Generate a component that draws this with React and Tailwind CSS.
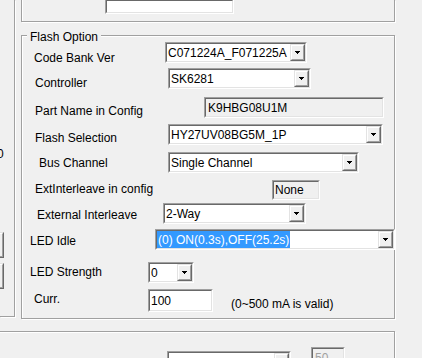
import React from 'react';

// Classic Win32 dialog: "Flash Option" group box with combos and edit boxes.

function Sunken({ className = '', bg = 'bg-white', children }) {
  return (
    <div className={`shrink-0 border border-t-[#a0a0a0] border-l-[#a0a0a0] border-r-white border-b-white ${className}`}>
      <div className={`h-full border border-t-[#696969] border-l-[#696969] border-r-[#e3e3e3] border-b-[#e3e3e3] ${bg}`}>
        {children}
      </div>
    </div>
  );
}

function Arrow() {
  return (
    <svg width="5" height="3" viewBox="0 0 5 3" shapeRendering="crispEdges">
      <rect x="0" y="0" width="5" height="1" fill="#000" />
      <rect x="1" y="1" width="3" height="1" fill="#000" />
      <rect x="2" y="2" width="1" height="1" fill="#000" />
    </svg>
  );
}

function DropBtn() {
  return (
    <div className="w-[15px] h-full shrink-0 border border-t-[#e3e3e3] border-l-[#e3e3e3] border-r-[#696969] border-b-[#696969]">
      <div className="h-full flex items-center justify-center border border-t-white border-l-white border-r-[#a0a0a0] border-b-[#a0a0a0] bg-[#f0f0f0]">
        <Arrow />
      </div>
    </div>
  );
}

function Combo({ className, text, selected }) {
  return (
    <Sunken className={`h-[21px] ${className}`}>
      <div className="flex h-full items-stretch">
        <div className="flex-1 flex items-center overflow-hidden whitespace-nowrap">
          {selected ? (
            <span className="h-full flex items-center bg-[#3399ff] text-white px-[1px]">{text}</span>
          ) : (
            <span className="pl-[1px]">{text}</span>
          )}
        </div>
        <DropBtn />
      </div>
    </Sunken>
  );
}

function Edit({ className, text, bg = 'bg-white', textCls = '' }) {
  return (
    <Sunken className={className} bg={bg}>
      <div className={`h-full flex items-center pl-[1px] whitespace-nowrap ${textCls}`}>{text}</div>
    </Sunken>
  );
}

function Raised({ className }) {
  return (
    <div className={`shrink-0 border border-t-[#e3e3e3] border-l-[#e3e3e3] border-r-[#696969] border-b-[#696969] ${className}`}>
      <div className="h-full border border-t-white border-l-white border-r-[#a0a0a0] border-b-[#a0a0a0] bg-[#f0f0f0]" />
    </div>
  );
}

function Row({ h, labelCls, label, children }) {
  return (
    <div className={`flex items-start ${h}`}>
      <span className={`shrink-0 whitespace-nowrap ${labelCls}`}>{label}</span>
      {children}
    </div>
  );
}

export default function App() {
  return (
    <div className="w-[422px] h-[358px] overflow-hidden bg-[#f0f0f0] text-black font-['Liberation_Sans',Arial,sans-serif] text-[12px] leading-[14px] flex flex-col">
      <div className="flex items-start">
        {/* left neighbour panel, mostly off screen */}
        <div className="w-[15px] h-[317px] shrink-0 flex flex-col border-r border-b border-[#a0a0a0] shadow-[1px_1px_0_#fff]">
          <span className="mt-[147px] -ml-[3px] h-[14px]">0</span>
          <Raised className="mt-[71px] -ml-[10px] w-[14px] h-[26px]" />
          <Raised className="mt-[5px] -ml-[10px] w-[14px] h-[26px]" />
        </div>

        <div className="ml-[6px] w-[374px] shrink-0 flex flex-col">
          {/* group above, cut off at the top */}
          <div className="h-[22px] border-x border-b border-[#a0a0a0] shadow-[inset_1px_0_0_#fff,1px_1px_0_#fff]">
            <Edit className="ml-[83px] w-[129px] h-[14px] border-t-0" text="" />
          </div>

          {/* Flash Option */}
          <div className="relative mt-[13px] h-[284px] border border-[#a0a0a0] shadow-[inset_1px_1px_0_#fff,1px_1px_0_#fff] pt-[6px]">
            <span className="absolute left-[5px] -top-[6px] px-[3px] bg-[#f0f0f0]">Flash Option</span>

            <Row h="h-[26px]" labelCls="w-[143px] pl-[12px] mt-[9px]" label="Code Bank Ver">
              <Combo className="w-[142px]" text="C071224A_F071225A" />
            </Row>
            <Row h="h-[29px]" labelCls="w-[146px] pl-[13px] mt-[8px]" label="Controller">
              <Combo className="w-[143px]" text="SK6281" />
            </Row>
            <Row h="h-[27px]" labelCls="w-[182px] pl-[13px] mt-[7px]" label="Part Name in Config">
              <Edit className="w-[180px] h-[21px]" bg="bg-[#f0f0f0]" textCls="pl-[2px]" text="K9HBG08U1M" />
            </Row>
            <Row h="h-[28px]" labelCls="w-[146px] pl-[13px] mt-[7px]" label="Flash Selection">
              <Combo className="w-[215px]" text="HY27UV08BG5M_1P" />
            </Row>
            <Row h="h-[28px]" labelCls="w-[146px] pl-[17px] mt-[4px]" label="Bus Channel">
              <Combo className="w-[191px]" text="Single Channel" />
            </Row>
            <Row h="h-[23px]" labelCls="w-[250px] pl-[13px] mt-[2px]" label="ExtInterleave in config">
              <Edit className="w-[48px] h-[20px]" bg="bg-[#f0f0f0]" text="None" />
            </Row>
            <Row h="h-[26px]" labelCls="w-[141px] pl-[15px] mt-[5px]" label="External Interleave">
              <Combo className="w-[143px]" text="2-Way" />
            </Row>
            <Row h="h-[33px]" labelCls="w-[133px] pl-[8px] mt-[5px]" label="LED Idle">
              <Combo className="w-[240px]" text="(0) ON(0.3s),OFF(25.2s)" selected />
            </Row>
            <Row h="h-[27px]" labelCls="w-[126px] pl-[8px] mt-[3px]" label="LED Strength">
              <Combo className="w-[46px]" text="0" />
            </Row>
            <Row h="h-[24px]" labelCls="w-[126px] pl-[12px] mt-[3px]" label="Curr.">
              <Edit className="w-[65px] h-[23px]" text="100" />
              <span className="ml-[18px] mt-[8px] whitespace-nowrap">(0~500 mA is valid)</span>
            </Row>
          </div>
        </div>
      </div>

      {/* group below, cut off at the bottom */}
      <div className="mt-[12px] -ml-[2px] w-[397px] h-[60px] shrink-0 flex items-start border border-[#a0a0a0] shadow-[inset_1px_1px_0_#fff,1px_1px_0_#fff]">
        <Combo className="mt-[19px] ml-[168px] w-[124px]" text="" />
        <Edit className="mt-[15px] ml-[20px] w-[34px] h-[21px]" bg="bg-[#f0f0f0]" textCls="text-[#a0a0a0] pl-[2px]" text="50" />
      </div>
    </div>
  );
}
